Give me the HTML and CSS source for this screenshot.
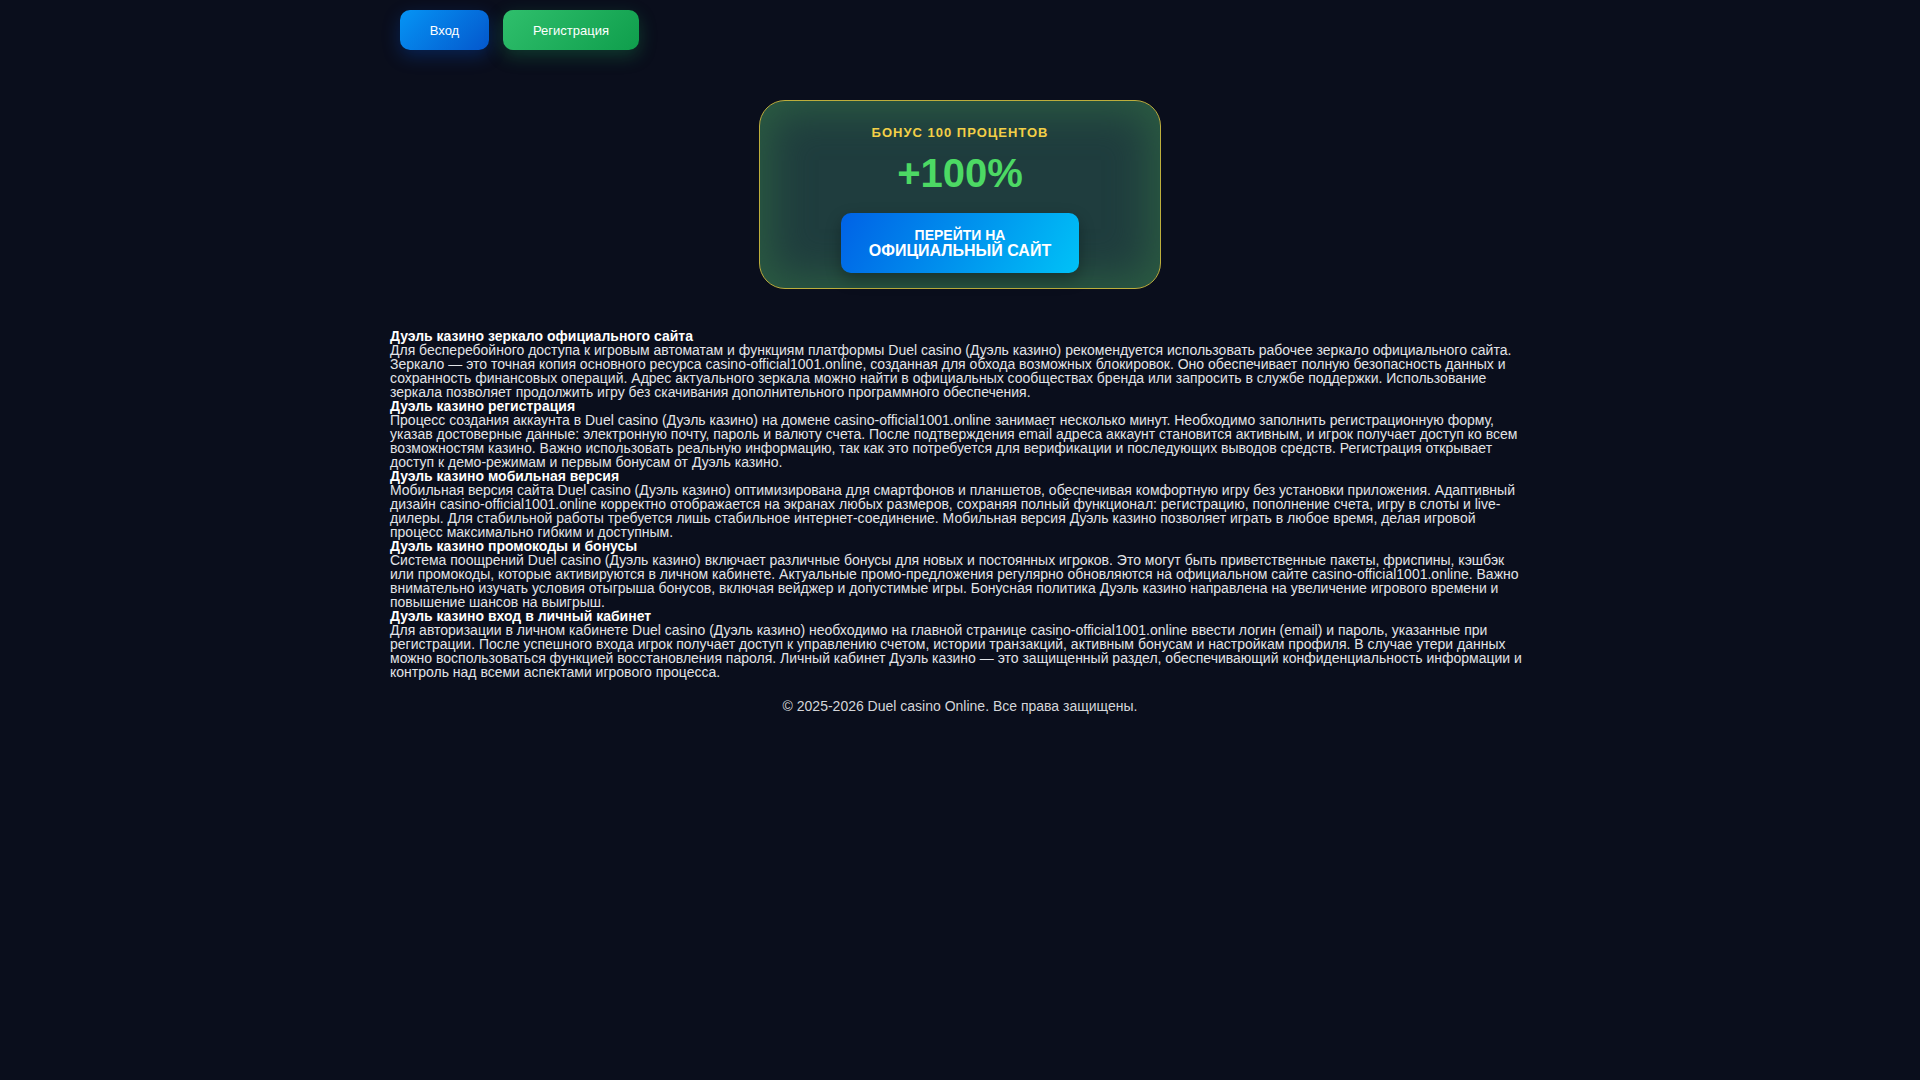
FILE: index.html
```html
<!DOCTYPE html>
<html lang="ru">
<head>
<meta charset="utf-8">
<title>Duel casino</title>
<link rel="stylesheet" href="styles.css">
</head>
<body>
<header class="header">
  <a class="btn btn-login" href="#">Вход</a>
  <a class="btn btn-register" href="#">Регистрация</a>
</header>
<main class="main">
  <section class="bonus-card">
    <div class="bonus-label">БОНУС 100 ПРОЦЕНТОВ</div>
    <div class="bonus-value">+100%</div>
    <a class="cta" href="#"><span class="cta-small">ПЕРЕЙТИ НА</span><span class="cta-big">ОФИЦИАЛЬНЫЙ САЙТ</span></a>
  </section>
  <article class="content">
    <h2>Дуэль казино зеркало официального сайта</h2>
    <p>Для бесперебойного доступа к игровым автоматам и функциям платформы Duel casino (Дуэль казино) рекомендуется использовать рабочее зеркало официального сайта. Зеркало — это точная копия основного ресурса casino-official1001.online, созданная для обхода возможных блокировок. Оно обеспечивает полную безопасность данных и сохранность финансовых операций. Адрес актуального зеркала можно найти в официальных сообществах бренда или запросить в службе поддержки. Использование зеркала позволяет продолжить игру без скачивания дополнительного программного обеспечения.</p>
    <h2>Дуэль казино регистрация</h2>
    <p>Процесс создания аккаунта в Duel casino (Дуэль казино) на домене casino-official1001.online занимает несколько минут. Необходимо заполнить регистрационную форму, указав достоверные данные: электронную почту, пароль и валюту счета. После подтверждения email адреса аккаунт становится активным, и игрок получает доступ ко всем возможностям казино. Важно использовать реальную информацию, так как это потребуется для верификации и последующих выводов средств. Регистрация открывает доступ к демо-режимам и первым бонусам от Дуэль казино.</p>
    <h2>Дуэль казино мобильная версия</h2>
    <p>Мобильная версия сайта Duel casino (Дуэль казино) оптимизирована для смартфонов и планшетов, обеспечивая комфортную игру без установки приложения. Адаптивный дизайн casino-official1001.online корректно отображается на экранах любых размеров, сохраняя полный функционал: регистрацию, пополнение счета, игру в слоты и live-дилеры. Для стабильной работы требуется лишь стабильное интернет-соединение. Мобильная версия Дуэль казино позволяет играть в любое время, делая игровой процесс максимально гибким и доступным.</p>
    <h2>Дуэль казино промокоды и бонусы</h2>
    <p>Система поощрений Duel casino (Дуэль казино) включает различные бонусы для новых и постоянных игроков. Это могут быть приветственные пакеты, фриспины, кэшбэк или промокоды, которые активируются в личном кабинете. Актуальные промо-предложения регулярно обновляются на официальном сайте casino-official1001.online. Важно внимательно изучать условия отыгрыша бонусов, включая вейджер и допустимые игры. Бонусная политика Дуэль казино направлена на увеличение игрового времени и повышение шансов на выигрыш.</p>
    <h2>Дуэль казино вход в личный кабинет</h2>
    <p>Для авторизации в личном кабинете Duel casino (Дуэль казино) необходимо на главной странице casino-official1001.online ввести логин (email) и пароль, указанные при регистрации. После успешного входа игрок получает доступ к управлению счетом, истории транзакций, активным бонусам и настройкам профиля. В случае утери данных можно воспользоваться функцией восстановления пароля. Личный кабинет Дуэль казино — это защищенный раздел, обеспечивающий конфиденциальность информации и контроль над всеми аспектами игрового процесса.</p>
  </article>
</main>
<footer class="footer">© 2025-2026 Duel casino Online. Все права защищены.</footer>
</body>
</html>
```

FILE: styles.css
```css
html, body {
  margin: 0;
  padding: 0;
}
body {
  background: #0a0e1c;
  color: #e2e4e8;
  font-family: "Liberation Sans", Arial, sans-serif;
  font-size: 14px;
  line-height: 1;
  min-height: 1080px;
}
.header {
  max-width: 1140px;
  margin: 0 auto;
  padding: 10px;
  box-sizing: border-box;
  display: flex;
  gap: 14px;
}
.btn {
  display: flex;
  align-items: center;
  justify-content: center;
  height: 40px;
  box-sizing: border-box;
  padding: 0;
  border-radius: 10px;
  color: #ffffff;
  font-size: 13px;
  text-decoration: none;
}
.btn-login {
  width: 89px;
  background: linear-gradient(135deg, #0594f5 0%, #0457cc 100%);
  box-shadow: 0 6px 18px rgba(0, 90, 230, 0.28);
}
.btn-register {
  width: 136px;
  background: linear-gradient(135deg, #2fbf6c 0%, #0f9e4c 100%);
  box-shadow: 0 6px 18px rgba(30, 190, 100, 0.25);
}
.main {
  max-width: 1140px;
  margin: 0 auto;
}
.bonus-card {
  width: 400px;
  margin: 40px auto 0;
  padding: 24px 0 15px;
  border: 1px solid #bdae3c;
  border-radius: 26px;
  background: #1f3d3e;
  box-shadow: inset 0 0 40px 10px #2b5c42;
  display: flex;
  flex-direction: column;
  align-items: center;
}
.bonus-label {
  color: #f3cf47;
  font-size: 13px;
  font-weight: bold;
  letter-spacing: 1px;
  line-height: 16px;
}
.bonus-value {
  margin-top: 12px;
  color: #4cd964;
  font-size: 40px;
  font-weight: bold;
  line-height: 40px;
}
.cta {
  margin-top: 20px;
  width: 238px;
  height: 60px;
  border-radius: 10px;
  background: linear-gradient(120deg, #0062e6 0%, #0096ee 55%, #00c2f7 100%);
  box-shadow: 0 6px 16px rgba(0, 0, 0, 0.3);
  color: #ffffff;
  font-weight: bold;
  text-decoration: none;
  display: flex;
  flex-direction: column;
  align-items: center;
  justify-content: center;
  gap: 1px;
}
.cta-small {
  font-size: 14px;
  line-height: 14px;
}
.cta-big {
  font-size: 16px;
  line-height: 16px;
}
.content {
  margin-top: 40px;
}
.content h2 {
  margin: 0;
  color: #ffffff;
  font-size: 14px;
  font-weight: bold;
  line-height: 14px;
}
.content p {
  margin: 0;
  color: #e2e4e8;
  font-size: 14px;
  line-height: 14px;
}
.footer {
  margin-top: 20px;
  text-align: center;
  color: #d4d6da;
  font-size: 14px;
  line-height: 14px;
}
```
